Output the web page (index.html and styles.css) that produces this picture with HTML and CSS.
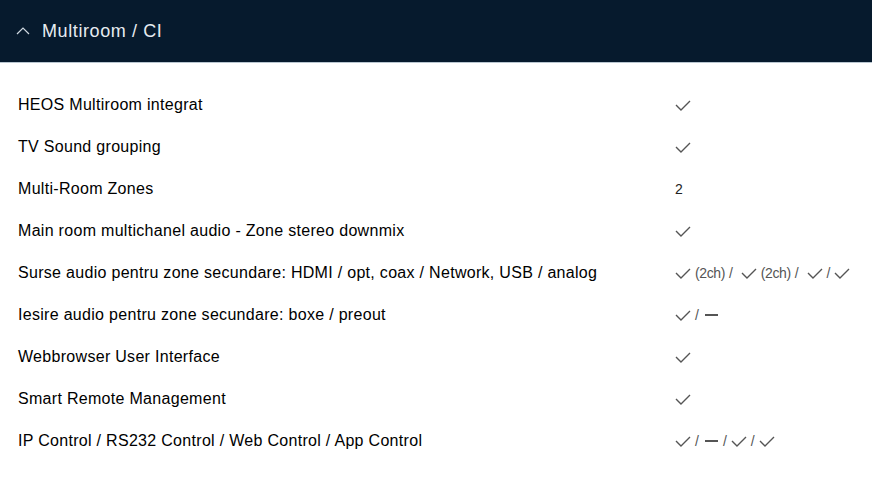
FILE: index.html
```html
<!DOCTYPE html>
<html>
<head>
<meta charset="utf-8">
<link rel="stylesheet" href="styles.css">
</head>
<body>
<div class="panel">
  <div class="header">
    <svg class="chev" width="14" height="9" viewBox="0 0 14 9"><path d="M1 8 L7 2 L13 8" fill="none" stroke="#cfd8e0" stroke-width="1.2"/></svg>
    <span class="title">Multiroom / CI</span>
  </div>
  <div class="rows">
    <div class="row"><div class="label">HEOS Multiroom integrat</div><div class="val"><svg class="ck" viewBox="0 0 16 11"><path d="M1 5 L6 10 L15 1"/></svg></div></div>
    <div class="row"><div class="label">TV Sound grouping</div><div class="val"><svg class="ck" viewBox="0 0 16 11"><path d="M1 5 L6 10 L15 1"/></svg></div></div>
    <div class="row"><div class="label">Multi-Room Zones</div><div class="val"><span class="num">2</span></div></div>
    <div class="row"><div class="label">Main room multichanel audio - Zone stereo downmix</div><div class="val"><svg class="ck" viewBox="0 0 16 11"><path d="M1 5 L6 10 L15 1"/></svg></div></div>
    <div class="row"><div class="label">Surse audio pentru zone secundare: HDMI / opt, coax / Network, USB / analog</div><div class="val"><svg class="ck" viewBox="0 0 16 11"><path d="M1 5 L6 10 L15 1"/></svg><span class="t">(2ch)</span><span class="s wide">/</span><svg class="ck" viewBox="0 0 16 11"><path d="M1 5 L6 10 L15 1"/></svg><span class="t">(2ch)</span><span class="s wide">/</span><svg class="ck" viewBox="0 0 16 11"><path d="M1 5 L6 10 L15 1"/></svg><span class="s">/</span><svg class="ck" viewBox="0 0 16 11"><path d="M1 5 L6 10 L15 1"/></svg></div></div>
    <div class="row"><div class="label">Iesire audio pentru zone secundare: boxe / preout</div><div class="val"><svg class="ck" viewBox="0 0 16 11"><path d="M1 5 L6 10 L15 1"/></svg><span class="s">/</span><span class="dash"></span></div></div>
    <div class="row"><div class="label">Webbrowser User Interface</div><div class="val"><svg class="ck" viewBox="0 0 16 11"><path d="M1 5 L6 10 L15 1"/></svg></div></div>
    <div class="row"><div class="label">Smart Remote Management</div><div class="val"><svg class="ck" viewBox="0 0 16 11"><path d="M1 5 L6 10 L15 1"/></svg></div></div>
    <div class="row"><div class="label">IP Control / RS232 Control / Web Control / App Control</div><div class="val"><svg class="ck" viewBox="0 0 16 11"><path d="M1 5 L6 10 L15 1"/></svg><span class="s">/</span><span class="dash"></span><span class="s">/</span><svg class="ck" viewBox="0 0 16 11"><path d="M1 5 L6 10 L15 1"/></svg><span class="s">/</span><svg class="ck" viewBox="0 0 16 11"><path d="M1 5 L6 10 L15 1"/></svg></div></div>
  </div>
</div>
</body>
</html>
```

FILE: styles.css
```css
html, body { margin: 0; padding: 0; background: #fff; }
body { font-family: "Liberation Sans", Arial, sans-serif; width: 872px; height: 494px; overflow: hidden; }
.header {
  height: 62px;
  background: #061a2d;
  border-bottom: 1px solid #b9c6d0;
  display: flex;
  align-items: center;
  padding-left: 16px;
}
.chev { margin-right: 12px; margin-top: -1px; }
.title { color: #e6ecf1; font-size: 18px; letter-spacing: 0.6px; }
.rows { padding-top: 21px; }
.row { height: 42px; display: flex; align-items: center; }
.label { width: 657px; padding-left: 18px; font-size: 16px; letter-spacing: 0.3px; color: #000; }
.val { display: flex; align-items: center; color: #555; font-size: 14px; }
.ck { width: 16px; height: 11px; fill: none; stroke: #555; stroke-width: 1.4; }
.t { margin-left: 4px; color: #555; font-size: 14px; letter-spacing: -0.4px; }
.s { margin: 0 4px; color: #555; font-size: 14px; }
.s.wide { margin-right: 8px; }
.num { color: #222; font-size: 14px; }
.dash { display: inline-block; width: 13px; height: 2px; background: #555; margin: 0 1px 0 2px; }
```
